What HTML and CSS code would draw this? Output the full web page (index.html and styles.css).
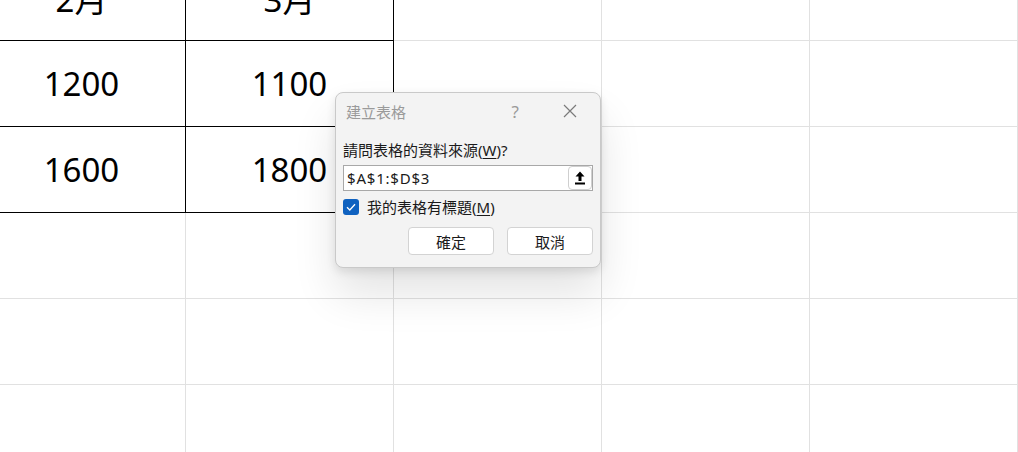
FILE: index.html
```html
<!DOCTYPE html>
<html lang="zh-Hant">
<head>
  <meta charset="UTF-8" />
  <meta name="viewport" content="width=device-width, initial-scale=1.0" />
  <title>建立表格</title>
  <link rel="stylesheet" href="styles.css">
</head>
<body>

  <div class="sheet">
    <div class="cell tb">2月</div>
    <div class="cell tb">3月</div>
    <div class="cell"></div>
    <div class="cell"></div>
    <div class="cell"></div>

    <div class="cell tb">1200</div>
    <div class="cell tb">1100</div>
    <div class="cell"></div>
    <div class="cell"></div>
    <div class="cell"></div>

    <div class="cell tb">1600</div>
    <div class="cell tb">1800</div>
    <div class="cell"></div>
    <div class="cell"></div>
    <div class="cell"></div>

    <div class="cell"></div>
    <div class="cell"></div>
    <div class="cell"></div>
    <div class="cell"></div>
    <div class="cell"></div>

    <div class="cell"></div>
    <div class="cell"></div>
    <div class="cell"></div>
    <div class="cell"></div>
    <div class="cell"></div>

    <div class="cell"></div>
    <div class="cell"></div>
    <div class="cell"></div>
    <div class="cell"></div>
    <div class="cell"></div>
  </div>

  <div class="dialog">
    <div class="dialog-title">
      <span class="title-text">建立表格</span>
      <span class="help">?</span>
      <svg class="close" width="14" height="14" viewBox="0 0 14 14">
        <path d="M1 1 L13 13 M13 1 L1 13" stroke="#7a7a7a" stroke-width="1.2" fill="none" />
      </svg>
    </div>

    <div class="dialog-body">
      <div class="prompt">請問表格的資料來源(<u>W</u>)?</div>

      <div class="range">
        <span class="range-text">$A$1:$D$3</span>
        <span class="range-btn">
          <svg width="10" height="14" viewBox="0 0 10 14">
            <path d="M5 0.5 L9.5 5.5 H6.5 V10 H3.5 V5.5 H0.5 Z" fill="#000" />
            <rect x="0" y="11.5" width="10" height="2" fill="#000" />
          </svg>
        </span>
      </div>

      <label class="check-row">
        <span class="checkbox">
          <svg width="10" height="8" viewBox="0 0 10 8">
            <path d="M1 4.2 L3.8 7 L9 1.2" stroke="#fff" stroke-width="1.3" fill="none" />
          </svg>
        </span>
        <span>我的表格有標題(<u>M</u>)</span>
      </label>

      <div class="actions">
        <button class="btn">確定</button>
        <button class="btn">取消</button>
      </div>
    </div>
  </div>

</body>
</html>
```

FILE: styles.css
```css
body {
  margin: 0;
  background-color: #fff;
  overflow: hidden;
  font-family: "Noto Sans", "Noto Sans CJK TC", sans-serif;
}

.sheet {
  display: grid;
  grid-template-columns: repeat(5, 208px);
  grid-auto-rows: 86px;
  margin-left: -22px;
  margin-top: -45px;
}

.cell {
  box-sizing: border-box;
  border-right: 1px solid #e1e1e1;
  border-bottom: 1px solid #e1e1e1;
  display: flex;
  align-items: center;
  justify-content: center;
  font-size: 33px;
  color: #000;
}

.cell.tb {
  border-right-color: #000;
  border-bottom-color: #000;
}

.dialog {
  position: absolute;
  left: 335px;
  top: 92px;
  width: 264px;
  background-color: #f3f3f3;
  border: 1px solid #c9c9c9;
  border-radius: 8px;
  box-shadow: 0 26px 44px rgba(0, 0, 0, 0.11), 0 4px 10px rgba(0, 0, 0, 0.10);
  font-family: "Noto Sans", "Noto Sans CJK TC", sans-serif;
  font-size: 15px;
  color: #1a1a1a;
}

.dialog-title {
  height: 36px;
  display: flex;
  align-items: center;
  padding-left: 10px;
  color: #9a9a9a;
  font-size: 15px;
}

.title-text {
  flex: 1;
}

.help {
  font-size: 17px;
  color: #9a9a9a;
  margin-right: 44px;
}

.close {
  margin-right: 23px;
}

.dialog-body {
  padding: 11px 7px 12px 7px;
}

.prompt {
  line-height: 20px;
  margin-bottom: 5px;
}

.prompt u,
.check-row u {
  text-underline-offset: 2px;
}

.range {
  box-sizing: border-box;
  height: 26px;
  display: flex;
  align-items: center;
  background-color: #fff;
  border: 1px solid #a8a8a8;
}

.range-text {
  flex: 1;
  padding-left: 3px;
  font-size: 15px;
  letter-spacing: 0.8px;
}

.range-btn {
  box-sizing: border-box;
  width: 24px;
  height: 24px;
  display: flex;
  align-items: center;
  justify-content: center;
  border: 1px solid #cfcfcf;
  border-radius: 4px;
  background-color: #fff;
}

.check-row {
  display: flex;
  align-items: center;
  gap: 8px;
  margin-top: 7px;
  line-height: 18px;
}

.checkbox {
  width: 16px;
  height: 16px;
  border-radius: 3px;
  background-color: #0f62c0;
  display: flex;
  align-items: center;
  justify-content: center;
}

.actions {
  display: flex;
  justify-content: flex-end;
  gap: 13px;
  margin-top: 11px;
}

.btn {
  width: 86px;
  height: 28px;
  background-color: #fff;
  border: 1px solid #d3d3d3;
  border-radius: 4px;
  font-family: "Noto Sans", "Noto Sans CJK TC", sans-serif;
  font-size: 15px;
  color: #1a1a1a;
  padding: 0;
}
```
